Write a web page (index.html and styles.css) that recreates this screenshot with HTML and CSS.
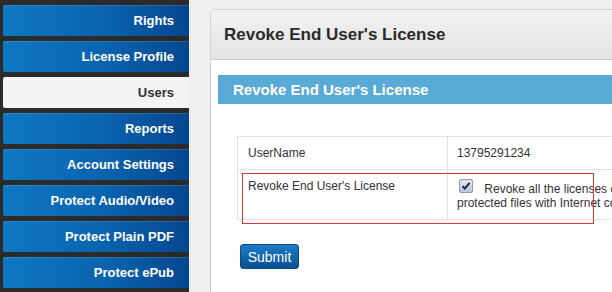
FILE: index.html
```html
<!DOCTYPE html>
<html lang="en">
<head>
    <meta charset="UTF-8">
    <title>Revoke End User's License</title>
    <link rel="stylesheet" href="styles.css">
</head>
<body>
    <div class="layout">
        <div class="sidebar">
            <a href="#" class="nav-item">Rights</a>
            <a href="#" class="nav-item">License Profile</a>
            <a href="#" class="nav-item active">Users</a>
            <a href="#" class="nav-item">Reports</a>
            <a href="#" class="nav-item">Account Settings</a>
            <a href="#" class="nav-item">Protect Audio/Video</a>
            <a href="#" class="nav-item">Protect Plain PDF</a>
            <a href="#" class="nav-item">Protect ePub</a>
        </div>

        <div class="main">
            <div class="panel">
                <div class="panel-header">Revoke End User's License</div>
                <div class="panel-body">
                    <div class="section-title">Revoke End User's License</div>
                    <div class="form-area">
                        <div class="table-wrap">
                            <table class="form-table">
                                <tr>
                                    <td class="label">UserName</td>
                                    <td class="value">13795291234</td>
                                </tr>
                                <tr>
                                    <td class="label">Revoke End User's License</td>
                                    <td class="value check-cell">
                                        <span class="checkbox">
                                            <svg width="14" height="14" viewBox="0 0 14 14">
                                                <path d="M3.5 7.2 L5.8 9.6 L10.6 3.8" fill="none" stroke="#1e2a3a" stroke-width="2"/>
                                            </svg>
                                        </span>
                                        Revoke all the licenses of the protected files with Internet connection
                                    </td>
                                </tr>
                            </table>
                            <div class="highlight"></div>
                        </div>
                        <button class="submit-btn">Submit</button>
                    </div>
                </div>
            </div>
        </div>
    </div>
</body>
</html>
```

FILE: styles.css
```css
html, body {
    margin: 0;
    height: 100%;
    overflow: hidden;
}
body {
    font-family: "Liberation Sans", Arial, sans-serif;
    background: #efefef;
    color: #333;
}
.layout {
    display: flex;
    height: 100%;
}
.sidebar {
    width: 186px;
    flex-shrink: 0;
    background: #2b2b2b;
    padding: 5px 0 0 3px;
    display: flex;
    flex-direction: column;
    gap: 5px;
}
.nav-item {
    display: block;
    height: 31px;
    line-height: 31px;
    padding-right: 15px;
    text-align: right;
    font-size: 13px;
    font-weight: bold;
    color: #fff;
    text-decoration: none;
    border-radius: 2px 0 0 2px;
    background: linear-gradient(to right, #0d78c3 0%, #0a63ae 55%, #06468f 100%);
    box-shadow: inset 0 1px 0 rgba(255, 255, 255, 0.12);
}
.nav-item.active {
    background: #f4f4f4;
    color: #333;
    box-shadow: none;
}
.main {
    flex: 1;
    padding: 9px 0 0 21px;
    min-width: 0;
}
.panel {
    width: 560px;
    background: #fff;
    border: 1px solid #d3d3d3;
    border-radius: 5px;
}
.panel-header {
    height: 49px;
    line-height: 49px;
    padding-left: 13px;
    font-size: 17px;
    font-weight: bold;
    color: #2a2a2a;
    border-bottom: 1px solid #c9c9c9;
    border-radius: 5px 5px 0 0;
    background: linear-gradient(to bottom, #f2f2f2, #e4e4e4);
}
.panel-body {
    padding: 15px 0 50px 7px;
}
.section-title {
    height: 29px;
    line-height: 29px;
    padding-left: 15px;
    font-size: 15px;
    font-weight: bold;
    color: #fff;
    background: #59aad6;
}
.form-area {
    padding: 32px 0 0 19px;
}
.table-wrap {
    position: relative;
}
.form-table {
    border-collapse: collapse;
    font-size: 12px;
    color: #333;
}
.form-table td {
    border: 1px solid #e1e1e1;
    padding: 9px 10px;
    line-height: 14px;
    vertical-align: top;
}
.form-table td.label {
    width: 189px;
}
.form-table td.value {
    width: 220px;
    padding-left: 9px;
}
.check-cell {
    padding-top: 10px;
}
.checkbox {
    display: inline-block;
    width: 14px;
    height: 14px;
    margin: 0 8px 0 2px;
    box-sizing: border-box;
    border: 1px solid #8a9bb5;
    border-radius: 2px;
    background: linear-gradient(to bottom, #e3e9f2, #b9c6d9);
    position: relative;
}
.checkbox svg {
    position: absolute;
    left: -1px;
    top: -1px;
}
.highlight {
    position: absolute;
    left: 5px;
    top: 37px;
    width: 350px;
    height: 49px;
    border: 1px solid #d23a3a;
    pointer-events: none;
}
.submit-btn {
    margin: 24px 0 0 3px;
    width: 59px;
    height: 25px;
    padding: 0;
    font-family: inherit;
    font-size: 14px;
    color: #fff;
    border: 1px solid #0a4c88;
    border-radius: 3px;
    background: linear-gradient(to bottom, #1c7cc6, #0a4f93);
    cursor: pointer;
}
```
